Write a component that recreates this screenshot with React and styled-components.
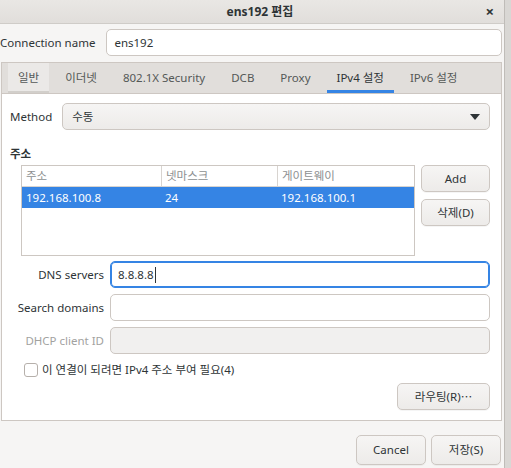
import styled, { createGlobalStyle } from "styled-components";

const GlobalStyle = createGlobalStyle`
  html, body {
    margin: 0;
    padding: 0;
    background: #d9d7d4;
  }
  body {
    font-family: "Noto Sans", "Noto Sans CJK KR", sans-serif;
    font-size: 11.5px;
    line-height: 16px;
    color: #2e3436;
  }
`;

const Screen = styled.div`
  width: 511px;
  height: 468px;
  display: flex;
  overflow: hidden;
`;

const Dialog = styled.div`
  width: 505px;
  height: 468px;
  background: #f6f5f4;
  border-right: 1px solid #bfbcb8;
  box-sizing: border-box;
  display: flex;
  flex-direction: column;
`;

const TitleBar = styled.div`
  height: 24px;
  flex: none;
  background: linear-gradient(#e9e7e4, #e1dedb);
  border-bottom: 1px solid #cfccc8;
  box-sizing: border-box;
  display: flex;
  align-items: center;
  justify-content: center;
  position: relative;
  font-weight: bold;
  font-size: 12px;
  padding-left: 16px;
`;

const Close = styled.span`
  position: absolute;
  right: 10px;
  top: 3px;
  font-size: 15px;
  font-weight: bold;
`;

const NameRow = styled.div`
  display: flex;
  align-items: center;
  margin: 5px 2px 0 0;
  gap: 11px;
`;

const Label = styled.span`
  white-space: nowrap;
  color: ${(p) => (p.$disabled ? "#a2a29f" : "#2e3436")};
  text-align: ${(p) => (p.$right ? "right" : "left")};
  width: ${(p) => p.$w || "auto"};
  flex: none;
`;

const Input = styled.div`
  flex: 1;
  height: 27px;
  box-sizing: border-box;
  border: 1px solid ${(p) => (p.$focus ? "#3584e4" : "#cdc7c2")};
  box-shadow: ${(p) => (p.$focus ? "inset 0 0 0 1px #3584e4" : "none")};
  background: ${(p) => (p.$disabled ? "#f1f0ef" : "#fff")};
  border-radius: 5px;
  display: flex;
  align-items: center;
  padding: 0 7px;
`;

const Caret = styled.span`
  display: inline-block;
  width: 1px;
  height: 16px;
  background: #2e3436;
  margin-left: 1px;
`;

const Notebook = styled.div`
  margin: 6px 2px 0 1px;
  border: 1px solid #cdc7c2;
  display: flex;
  flex-direction: column;
  height: 359px;
  box-sizing: border-box;
`;

const TabBar = styled.div`
  height: 30px;
  background: #e1dedb;
  border-bottom: 1px solid #cdc7c2;
  display: flex;
  padding-left: 3px;
  flex: none;
`;

const Tab = styled.div`
  margin: 0 3px;
  padding: 0 10px;
  display: flex;
  align-items: center;
  color: ${(p) => (p.$active ? "#2e3436" : "#545857")};
  background: ${(p) => (p.$hover ? "#ebe9e7" : "transparent")};
  box-shadow: ${(p) =>
    p.$active ? "inset 0 -3px 0 #3584e4" : p.$hover ? "inset 0 -2px 0 #d2cfcb" : "none"};
  white-space: nowrap;
`;

const Page = styled.div`
  flex: 1;
  background: #fff;
  padding: 9px 11px 0 8px;
  display: flex;
  flex-direction: column;
`;

const MethodRow = styled.div`
  display: flex;
  align-items: center;
  gap: 10px;
`;

const Combo = styled.div`
  flex: 1;
  height: 27px;
  box-sizing: border-box;
  border: 1px solid #cdc7c2;
  border-radius: 5px;
  background: linear-gradient(#f6f5f4, #edebe9);
  display: flex;
  align-items: center;
  justify-content: space-between;
  padding: 0 9px 0 9px;
`;

const Arrow = styled.span`
  width: 0;
  height: 0;
  border-left: 5px solid transparent;
  border-right: 5px solid transparent;
  border-top: 6px solid #2e3436;
`;

const Section = styled.div`
  font-weight: bold;
  margin-top: 15px;
  height: 18px;
  line-height: 18px;
`;

const AddrRow = styled.div`
  display: flex;
  margin: 2px 0 0 11px;
  gap: 6px;
`;

const Table = styled.div`
  width: 396px;
  height: 91px;
  box-sizing: border-box;
  border: 1px solid #cdc7c2;
  display: flex;
  flex-direction: column;
`;

const Row = styled.div`
  display: grid;
  grid-template-columns: 139px 116px 1fr;
  height: ${(p) => (p.$head ? "20px" : "21px")};
  background: ${(p) => (p.$selected ? "#3584e4" : "#fff")};
  color: ${(p) => (p.$selected ? "#fff" : p.$head ? "#8d9091" : "#2e3436")};
  border-bottom: ${(p) => (p.$head ? "1px solid #d8d4d0" : "none")};
`;

const Cell = styled.div`
  display: flex;
  align-items: center;
  padding-left: 4px;
  border-left: ${(p) => (p.$sep ? "1px solid #d8d4d0" : "none")};
  white-space: nowrap;
`;

const ButtonColumn = styled.div`
  display: flex;
  flex-direction: column;
  gap: 7px;
`;

const Button = styled.div`
  width: ${(p) => p.$w || "69px"};
  height: ${(p) => p.$h || "27px"};
  box-sizing: border-box;
  border: 1px solid #cdc7c2;
  border-radius: 5px;
  background: linear-gradient(#f6f5f4, #edebe9);
  box-shadow: 0 1px 0 rgba(0, 0, 0, 0.04);
  display: flex;
  align-items: center;
  justify-content: center;
  white-space: nowrap;
`;

const Form = styled.div`
  display: flex;
  flex-direction: column;
  gap: 6px;
  margin-top: 5px;
`;

const FormRow = styled.div`
  display: flex;
  align-items: center;
  gap: 6px;
`;

const CheckRow = styled.div`
  display: flex;
  align-items: center;
  gap: 4px;
  margin: 8px 0 0 14px;
`;

const Box = styled.span`
  width: 14px;
  height: 14px;
  box-sizing: border-box;
  border: 1px solid #b6b0ab;
  border-radius: 3px;
  background: #fff;
`;

const RouteRow = styled.div`
  display: flex;
  justify-content: flex-end;
  margin-top: 5px;
`;

const Footer = styled.div`
  display: flex;
  justify-content: flex-end;
  gap: 5px;
  padding: 14px 3px 0 0;
`;

const columns = ["주소", "넷마스크", "게이트웨이"];
const entry = ["192.168.100.8", "24", "192.168.100.1"];
const tabs = ["일반", "이더넷", "802.1X Security", "DCB", "Proxy", "IPv4 설정", "IPv6 설정"];

export default function App() {
  return (
    <>
      <GlobalStyle />
      <Screen>
        <Dialog>
          <TitleBar>
            ens192 편집
            <Close>×</Close>
          </TitleBar>
          <NameRow>
            <Label>Connection name</Label>
            <Input>ens192</Input>
          </NameRow>
          <Notebook>
            <TabBar>
              {tabs.map((t) => (
                <Tab key={t} $active={t === "IPv4 설정"} $hover={t === "일반"}>
                  {t}
                </Tab>
              ))}
            </TabBar>
            <Page>
              <MethodRow>
                <Label>Method</Label>
                <Combo>
                  수동
                  <Arrow />
                </Combo>
              </MethodRow>
              <Section>주소</Section>
              <AddrRow>
                <Table>
                  <Row $head>
                    {columns.map((c, i) => (
                      <Cell key={c} $sep={i > 0}>
                        {c}
                      </Cell>
                    ))}
                  </Row>
                  <Row $selected>
                    {entry.map((c) => (
                      <Cell key={c}>{c}</Cell>
                    ))}
                  </Row>
                </Table>
                <ButtonColumn>
                  <Button>Add</Button>
                  <Button>삭제(D)</Button>
                </ButtonColumn>
              </AddrRow>
              <Form>
                <FormRow>
                  <Label $right $w="94px">DNS servers</Label>
                  <Input $focus>
                    8.8.8.8
                    <Caret />
                  </Input>
                </FormRow>
                <FormRow>
                  <Label $right $w="94px">Search domains</Label>
                  <Input />
                </FormRow>
                <FormRow>
                  <Label $right $w="94px" $disabled>DHCP client ID</Label>
                  <Input $disabled />
                </FormRow>
              </Form>
              <CheckRow>
                <Box />
                이 연결이 되려면 IPv4 주소 부여 필요(4)
              </CheckRow>
              <RouteRow>
                <Button $w="93px">라우팅(R)⋯</Button>
              </RouteRow>
            </Page>
          </Notebook>
          <Footer>
            <Button $w="70px" $h="30px">Cancel</Button>
            <Button $w="70px" $h="30px">저장(S)</Button>
          </Footer>
        </Dialog>
      </Screen>
    </>
  );
}
